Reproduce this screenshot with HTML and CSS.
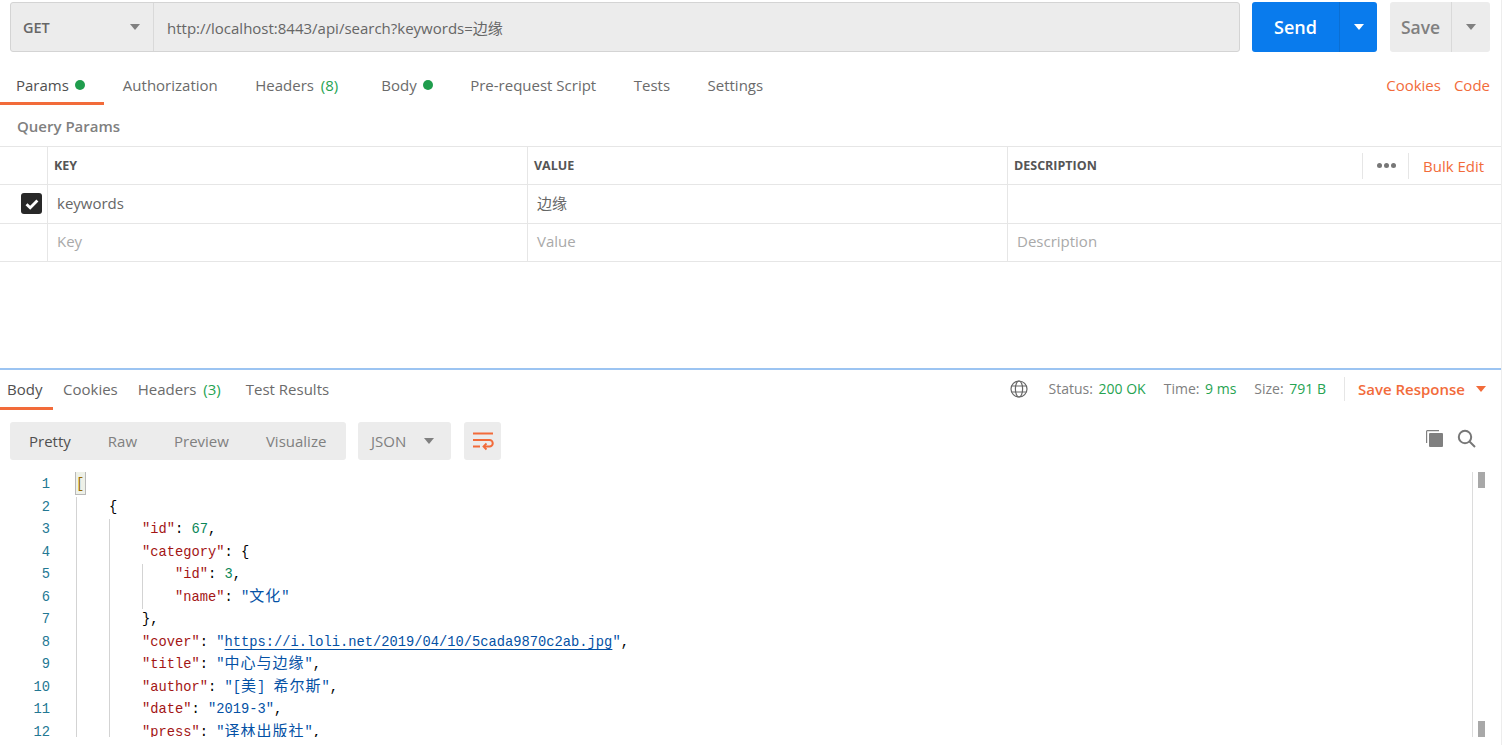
FILE: index.html
```html
<!doctype html>
<html lang="en">
<head>
  <meta charset="utf-8" />
  <title>Postman</title>
  <link rel="stylesheet" href="styles.css">
</head>
<body>
  <div class="app">
    <section class="request">
      <div class="url-bar">
        <div class="url-box">
          <div class="method"><span>GET</span><i class="caret caret-grey"></i></div>
          <div class="url">http://localhost:8443/api/search?keywords=边缘</div>
        </div>
        <div class="split-btn send"><span class="split-main">Send</span><span class="split-side"><i class="caret caret-white"></i></span></div>
        <div class="split-btn save"><span class="split-main">Save</span><span class="split-side"><i class="caret caret-grey"></i></span></div>
      </div>

      <nav class="tabs req-tabs">
        <a class="tab active">Params<i class="dot"></i></a>
        <a class="tab">Authorization</a>
        <a class="tab tab-wide">Headers <em>(8)</em></a>
        <a class="tab">Body<i class="dot"></i></a>
        <a class="tab">Pre-request Script</a>
        <a class="tab">Tests</a>
        <a class="tab">Settings</a>
        <div class="tab-links"><a>Cookies</a><a>Code</a></div>
      </nav>

      <h2 class="section-title">Query Params</h2>

      <div class="params">
        <div class="row row-head">
          <div class="cell cell-check"></div>
          <div class="cell">KEY</div>
          <div class="cell">VALUE</div>
          <div class="cell cell-desc">
            <span>DESCRIPTION</span>
            <div class="row-tools">
              <span class="more"><i></i><i></i><i></i></span>
              <a class="bulk">Bulk Edit</a>
            </div>
          </div>
        </div>
        <div class="row">
          <div class="cell cell-check">
            <span class="checkbox">
              <svg width="16" height="16" viewBox="0 0 16 16"><path d="M2.500 8.200l3.700 3.600 7.200-7.400" fill="none" stroke="#fff" stroke-width="2.800"/></svg>
            </span>
          </div>
          <div class="cell value">keywords</div>
          <div class="cell value">边缘</div>
          <div class="cell value"></div>
        </div>
        <div class="row">
          <div class="cell cell-check"></div>
          <div class="cell ghost">Key</div>
          <div class="cell ghost">Value</div>
          <div class="cell ghost">Description</div>
        </div>
      </div>
    </section>

    <section class="response">
      <nav class="tabs res-tabs">
        <a class="tab active">Body</a>
        <a class="tab">Cookies</a>
        <a class="tab tab-wide">Headers <em>(3)</em></a>
        <a class="tab">Test Results</a>
        <div class="res-meta">
          <svg class="globe" width="18" height="18" viewBox="0 0 18 18" fill="none" stroke="#666" stroke-width="1.200"><circle cx="9" cy="9" r="8"/><ellipse cx="9" cy="9" rx="3.600" ry="8"/><path d="M1.600 6h14.800M1.600 12h14.800"/></svg>
          <span class="stat">Status: <b>200 OK</b></span>
          <span class="stat">Time: <b>9 ms</b></span>
          <span class="stat">Size: <b>791 B</b></span>
          <a class="save-res">Save Response<i class="caret caret-orange"></i></a>
        </div>
      </nav>

      <div class="toolbar">
        <div class="views">
          <span class="view on">Pretty</span>
          <span class="view">Raw</span>
          <span class="view">Preview</span>
          <span class="view">Visualize</span>
        </div>
        <div class="format"><span>JSON</span><i class="caret caret-grey"></i></div>
        <div class="wrap-btn">
          <svg width="22" height="20" viewBox="0 0 22 20" fill="none" stroke="#f26b3a" stroke-width="2"><path d="M1 2.500h20M1 15.500h7M1 9h16.500a3.200 3.200 0 0 1 0 6.500H12"/><path d="M14.500 12.500l-3 3 3 3" stroke-width="1.800"/></svg>
        </div>
        <div class="tool-icons">
          <svg width="19" height="19" viewBox="0 0 19 19"><path d="M1 14V2.500C1 1.700 1.700 1 2.500 1H14v1.200H2.200V14z" fill="#808080"/><rect x="4" y="4" width="14" height="14" rx="1" fill="#808080"/></svg>
          <svg width="19" height="19" viewBox="0 0 19 19" fill="none" stroke="#777" stroke-width="2"><circle cx="8" cy="8" r="6.200"/><path d="M12.500 12.500l5.500 5.500"/></svg>
        </div>
      </div>

      <div class="code-wrap">
        <div class="gutter">
          <span>1</span><span>2</span><span>3</span><span>4</span><span>5</span><span>6</span><span>7</span><span>8</span><span>9</span><span>10</span><span>11</span><span>12</span>
        </div>
        <div class="code">
          <div class="line"><span class="match">[</span></div>
          <div class="line"><i class="ind"></i>{</div>
          <div class="line"><i class="ind"></i><i class="ind"></i><span><s>"id"</s>: <u>67</u>,</span></div>
          <div class="line"><i class="ind"></i><i class="ind"></i><span><s>"category"</s>: {</span></div>
          <div class="line"><i class="ind"></i><i class="ind"></i><i class="ind"></i><span><s>"id"</s>: <u>3</u>,</span></div>
          <div class="line"><i class="ind"></i><i class="ind"></i><i class="ind"></i><span><s>"name"</s>: <q>"<b>文化</b>"</q></span></div>
          <div class="line"><i class="ind"></i><i class="ind"></i><span>},</span></div>
          <div class="line"><i class="ind"></i><i class="ind"></i><span><s>"cover"</s>: <q>"<a>https://i.loli.net/2019/04/10/5cada9870c2ab.jpg</a>"</q>,</span></div>
          <div class="line"><i class="ind"></i><i class="ind"></i><span><s>"title"</s>: <q>"<b>中心与边缘</b>"</q>,</span></div>
          <div class="line"><i class="ind"></i><i class="ind"></i><span><s>"author"</s>: <q>"[<b>美</b>] <b>希尔斯</b>"</q>,</span></div>
          <div class="line"><i class="ind"></i><i class="ind"></i><span><s>"date"</s>: <q>"2019-3"</q>,</span></div>
          <div class="line"><i class="ind"></i><i class="ind"></i><span><s>"press"</s>: <q>"<b>译林出版社</b>"</q>,</span></div>
        </div>
        <div class="scroll"><i></i><i></i></div>
      </div>
    </section>
  </div>
</body>
</html>
```

FILE: styles.css
```css
:root{
  --orange:#f26b3a;
  --green:#26a352;
  --line:#e6e6e6;
  --fill:#ececec;
  --text:#505050;
  --muted:#808080;
}

html,body{ height:100%; }
body{
  margin:0;
  overflow:hidden;
  background:#fff;
  font-family:"Open Sans","Noto Sans CJK SC",sans-serif;
  font-size:15px;
  color:var(--text);
}
.app{
  height:745px;
  border-right:1px solid #ededed;
  overflow:hidden;
}
a{ color:inherit; }
em{ font-style:normal; margin-left:3px; color:var(--green); }

/* carets */
.caret{
  display:inline-block;
  width:0;
  height:0;
  border-left:5px solid transparent;
  border-right:5px solid transparent;
}
.caret-grey{ border-top:6px solid #808080; }
.caret-white{ border-top:6px solid #fff; }
.caret-orange{ border-top:6px solid var(--orange); }

/* request */
.request{ height:368px; }
.url-bar{
  display:flex;
  height:50px;
  padding:2px 0 0 10px;
}
.url-box{
  width:1230px;
  display:flex;
  box-sizing:border-box;
  border:1px solid #d4d4d4;
  border-radius:3px;
  background:var(--fill);
}
.method{
  width:143px;
  flex:none;
  box-sizing:border-box;
  display:flex;
  align-items:center;
  justify-content:space-between;
  padding:0 13px 0 12px;
  border-right:1px solid #d9d9d9;
  font-size:14.500px;
  font-weight:600;
  color:#666;
}
.url{
  display:flex;
  align-items:center;
  padding-left:13px;
  color:#666;
}
.split-btn{
  display:flex;
  height:50px;
  border-radius:3px;
  font-size:18px;
  font-weight:600;
}
.split-main{ display:flex; align-items:center; justify-content:center; }
.split-side{ display:flex; align-items:center; justify-content:center; }
.send{
  width:125px;
  margin-left:12px;
  background:#097bed;
  color:#fff;
}
.send .split-main{ width:87px; }
.send .split-side{ width:37px; border-left:1px solid #0a6fd4; }
.save{
  width:100px;
  margin-left:13px;
  font-size:17.500px;
  background:var(--fill);
  color:#808080;
}
.save .split-main{ width:61px; }
.save .split-side{ width:38px; border-left:1px solid #d9d9d9; }

/* tabs */
.tabs{ display:flex; }
.tab{
  display:flex;
  align-items:center;
  padding:0 19.500px 0 18px;
  white-space:pre;
  color:#6b6b6b;
}
.tab.active{ color:#505050; }
.dot{
  width:10px;
  height:10px;
  margin-left:6px;
  border-radius:50%;
  background:#1f9d4d;
}
.req-tabs{
  height:54px;
  box-sizing:border-box;
  padding-bottom:1px;
}
.req-tabs .tab{ padding-top:16px; border-bottom:3px solid transparent; }
.req-tabs .tab.active{ padding-left:16px; padding-right:19px; border-bottom-color:var(--orange); }
.req-tabs .tab.active + .tab{ padding-left:19px; }
.req-tabs .tab-wide{ padding-right:25px; }
.tab-links{
  display:flex;
  gap:13px;
  align-items:center;
  margin-left:auto;
  padding:13px 11px 0 0;
  color:var(--orange);
}

.section-title{
  margin:0;
  height:40px;
  padding:0 17px;
  box-sizing:border-box;
  display:flex;
  align-items:center;
  font-size:15px;
  font-weight:600;
  color:#808080;
}

/* params table */
.params{ border-top:1px solid var(--line); }
.row{
  display:grid;
  grid-template-columns:47px 480px 480px 1fr;
  height:38.330px;
  box-sizing:border-box;
  border-bottom:1px solid var(--line);
}
.cell{
  display:flex;
  align-items:center;
  padding:0 9px;
  border-left:1px solid var(--line);
  min-width:0;
}
.cell-check{ border-left:0; padding:0 0 0 21px; }
.row-head .cell{
  padding-left:6px;
  font-size:12.500px;
  font-weight:700;
  color:#555;
}
.row-head .cell-check{ padding:0; }
.cell-desc{ justify-content:space-between; padding-right:0; }
.row-tools{
  display:flex;
  align-items:center;
  height:26px;
}
.more{
  display:flex;
  gap:2px;
  align-items:center;
  width:47px;
  height:26px;
  box-sizing:border-box;
  padding-left:14px;
  border-left:1px solid var(--line);
  border-right:1px solid var(--line);
}
.more i{ width:5px; height:5px; border-radius:50%; background:#777; }
.bulk{
  width:92px;
  box-sizing:border-box;
  padding-left:14px;
  font-size:15px;
  font-weight:400;
  color:var(--orange);
}
.checkbox{
  width:21px;
  height:21px;
  display:flex;
  align-items:center;
  justify-content:center;
  border-radius:3px;
  background:#282828;
}
.value{ padding-bottom:2px; color:#666; }
.ghost{ padding-bottom:2px; color:#a9a9a9; }

/* response */
.response{ border-top:2px solid #9cc4f2; }
.res-tabs{ height:40px; }
.res-tabs .tab{ padding:0; border-bottom:3px solid transparent; margin-left:20px; }
.res-tabs .tab.active{ margin-left:0; padding-left:7px; box-sizing:border-box; width:53px; border-bottom-color:var(--orange); }
.res-tabs .tab.active + .tab{ margin-left:10px; }
.res-tabs .tab-wide + .tab{ margin-left:25px; }
.res-meta{
  display:flex;
  align-items:center;
  margin-left:auto;
  padding:0 15px 3px 0;
  font-size:14px;
  color:#808080;
}
.globe{ margin-right:21px; }
.stat{ margin-right:18px; white-space:pre; }
.stat b{ font-weight:400; color:var(--green); margin-left:2px; }
.save-res{
  display:flex;
  align-items:center;
  height:24px;
  padding-left:13px;
  border-left:1px solid var(--line);
  font-size:15px;
  font-weight:600;
  color:var(--orange);
}
.save-res .caret{ margin-left:11px; }

.toolbar{
  display:flex;
  align-items:center;
  height:38px;
  margin-top:12px;
  padding-left:10px;
}
.views{
  display:flex;
  align-items:center;
  width:336px;
  height:38px;
  padding-left:19px;
  box-sizing:border-box;
  gap:37px;
  border-radius:3px;
  background:var(--fill);
  color:#808080;
}
.view.on{ color:#505050; }
.format{
  display:flex;
  align-items:center;
  justify-content:space-between;
  width:93px;
  height:38px;
  box-sizing:border-box;
  margin-left:12px;
  padding:0 17px 0 13px;
  border-radius:3px;
  background:var(--fill);
  color:#808080;
}
.wrap-btn{
  display:flex;
  align-items:center;
  justify-content:center;
  width:37px;
  height:38px;
  margin-left:13px;
  border-radius:3px;
  background:var(--fill);
}
.tool-icons{
  display:flex;
  gap:13px;
  margin-left:auto;
  margin-bottom:5px;
  padding-right:25px;
}

/* code */
.code-wrap{
  display:flex;
  height:265px;
  margin-top:12px;
  overflow:hidden;
  font-family:"Liberation Mono","Noto Sans CJK SC",monospace;
  font-size:13.750px;
  line-height:22.500px;
}
.gutter{
  flex:none;
  width:50px;
  padding-top:2px;
  display:flex;
  flex-direction:column;
  align-items:flex-end;
  color:#237893;
}
.code{
  flex:1;
  margin-left:26px;
  padding-top:2px;
  color:#000;
}
.line{ display:flex; height:22.500px; white-space:pre; }
.ind{
  flex:none;
  width:33px;
  box-sizing:border-box;
  border-left:1px solid #d3d3d3;
}
.match{
  box-sizing:border-box;
  width:9px;
  height:22px;
  margin-top:-2px;
  padding-top:2px;
  outline:1px solid #b9b9b9;
  background:#eef1e8;
  color:#9a6a00;
}
.code s{ text-decoration:none; color:#a31515; }
.code u{ text-decoration:none; color:#098658; }
.code q{ quotes:none; color:#0451a5; }
.code q::before,.code q::after{ content:none; }
.code q a{ text-decoration:underline; text-underline-offset:3px; }
.code b{
  font-family:"Noto Sans CJK SC",sans-serif;
  font-weight:400;
  font-size:15px;
  line-height:1;
  letter-spacing:1px;
}
.scroll{
  flex:none;
  display:flex;
  flex-direction:column;
  justify-content:space-between;
  align-items:flex-start;
  width:21px;
  margin-right:8px;
  padding-left:5px;
  border-left:1px solid #dcdcdc;
  box-sizing:border-box;
}
.scroll i{ width:7px; height:16px; background:#a8a8a8; }
```
